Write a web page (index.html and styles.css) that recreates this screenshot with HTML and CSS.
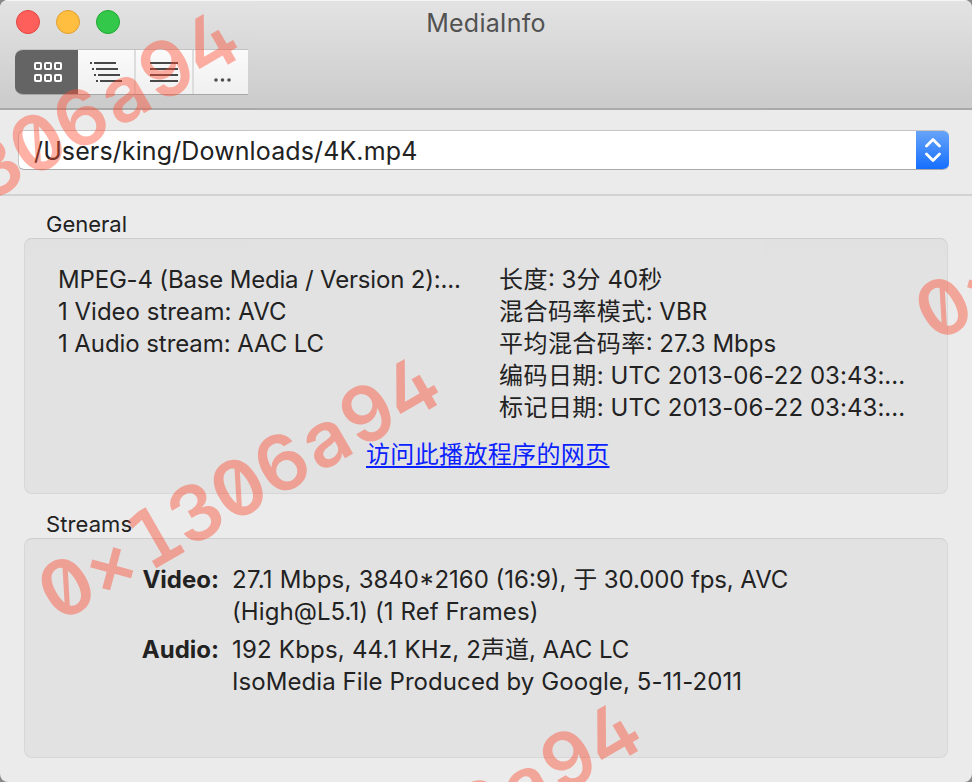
FILE: index.html
```html
<!DOCTYPE html>
<html lang="zh-CN">
<head>
<meta charset="utf-8">
<title>MediaInfo</title>
<link rel="stylesheet" href="styles.css">
</head>
<body>
<div class="window">
  <header class="titlebar">
    <div class="title-row">
      <div class="lights"><i class="light red"></i><i class="light yellow"></i><i class="light green"></i></div>
      <h1 class="title">MediaInfo</h1>
    </div>
    <div class="segments">
      <button class="segment active" aria-label="Easy">
        <svg width="28" height="20" fill="none" stroke="#fff" stroke-width="2"><rect x="1" y="1" width="6" height="6" rx="1"/><rect x="11" y="1" width="6" height="6" rx="1"/><rect x="21" y="1" width="6" height="6" rx="1"/><rect x="1" y="13" width="6" height="6" rx="1"/><rect x="11" y="13" width="6" height="6" rx="1"/><rect x="21" y="13" width="6" height="6" rx="1"/></svg>
      </button>
      <button class="segment tree" aria-label="Tree">
        <svg width="32" height="20" fill="none" stroke="#484848" stroke-width="2"><path d="M0 1h2M4 1h22M2 7h2M6 7h22M4 13h2M8 13h22M6 19h2M10 19h22"/></svg>
      </button>
      <button class="segment list" aria-label="Text">
        <svg width="28" height="20" fill="none" stroke="#484848" stroke-width="2"><path d="M0 1h28M0 7h28M0 13h28M0 19h28"/></svg>
      </button>
      <button class="segment more" aria-label="More">
        <svg width="18" height="4" fill="#505050"><circle cx="2" cy="2" r="1.8"/><circle cx="8.5" cy="2" r="1.8"/><circle cx="15" cy="2" r="1.8"/></svg>
      </button>
    </div>
  </header>

  <div class="file-row">
    <div class="combo">
      <span class="path">/Users/king/Downloads/4K.mp4</span>
      <span class="stepper">
        <svg width="16" height="26" fill="none" stroke="#fff" stroke-width="2.8" stroke-linecap="round" stroke-linejoin="round"><path d="M1.500 9 8 2.500l6.500 6.500M1.500 17 8 23.500l6.500-6.500"/></svg>
      </span>
    </div>
  </div>

  <main class="content">
    <h2 class="label general">General</h2>
    <section class="box general-box">
      <div class="columns">
        <div class="lines">
          <p class="format">MPEG-4 (Base Media / Version 2):...</p>
          <p>1 Video stream: AVC</p>
          <p class="audio-count">1 Audio stream: AAC LC</p>
        </div>
        <div class="lines">
          <p><span class="han">长度</span>: 3<span class="han">分</span> 40<span class="han">秒</span></p>
          <p><span class="han">混合码率模式</span>: VBR</p>
          <p><span class="han">平均混合码率</span>: 27.3 Mbps</p>
          <p class="date"><span class="han">编码日期</span>: UTC 2013-06-22 03:43:...</p>
          <p class="date"><span class="han">标记日期</span>: UTC 2013-06-22 03:43:...</p>
        </div>
      </div>
      <a class="link">访问此播放程序的网页</a>
    </section>

    <h2 class="label streams">Streams</h2>
    <section class="box streams-box">
      <dl class="stream">
        <dt>Video:</dt>
        <dd><p><span class="rate">27.1 Mbps, </span>3840*2160 (16:9), <span class="fps">于 30.000 fps, AVC</span></p><p class="wide">(High@L5.1) (1 Ref Frames)</p></dd>
        <dt>Audio:</dt>
        <dd><p><span class="khz">192 Kbps, 44.1 KHz, </span>2声道<span class="fps">, AAC LC</span></p><p class="wide">IsoMedia File Produced by Google, 5-11-2011</p></dd>
      </dl>
    </section>
  </main>
  <svg class="watermark" width="972" height="782" viewBox="0 0 972 782">
    <defs>
      <text id="mark" x="-198.500 -150.500 -97.500 -49.700 0 49.700 99.500 149 199" y="28.500">0<tspan class="times">×</tspan><tspan class="one">1</tspan>306a94</text>
    </defs>
    <use href="#mark" transform="translate(37 142) rotate(-30)"/>
    <use href="#mark" transform="translate(238 487) rotate(-30)"/>
    <use href="#mark" transform="translate(439 833) rotate(-30)"/>
    <use href="#mark" transform="translate(1115 207) rotate(-30)"/>
  </svg>
</div>
</body>
</html>
```
FILE: styles.css
```css
* { box-sizing: border-box; }
html { background: #888; }
body {
  margin: 0;
  font-family: Inter, "Noto Sans CJK SC", sans-serif;
  font-size: 24px;
  color: #222;
}
h1, h2, p, dl, dd { margin: 0; font-weight: 400; }
.window {
  position: relative;
  width: 972px;
  height: 782px;
  overflow: hidden;
  border-radius: 8px;
  background: #ebebeb;
}
.titlebar {
  height: 110px;
  border-top: 1px solid #f5f5f5;
  border-bottom: 2px solid #aaa;
  background: linear-gradient(#e3e3e3, #cbcbcb);
}
.title-row {
  display: grid;
  grid-template-columns: 1fr auto 1fr;
  height: 48px;
  padding: 0 0 0 16px;
}
.lights { display: flex; gap: 16px; padding-top: 9px; }
.light { width: 24px; height: 24px; border: 1px solid; border-radius: 50%; }
.red { background: #ff605c; border-color: #e2463f; }
.yellow { background: #ffbe40; border-color: #dfa033; }
.green { background: #34c84a; border-color: #20a934; }
.title { padding-right: 16px; font-size: 25px; line-height: 45px; letter-spacing: .2px; color: #525252; }
.segments {
  display: flex;
  width: 233px;
  height: 46px;
  margin-left: 15px;
  border-radius: 8px 0 0 8px;
  overflow: hidden;
  border-top: 1px solid #c3c3c3;
  border-bottom: 1px solid #a8a8a8;
}
.segment {
  display: flex;
  align-items: center;
  width: 58px;
  padding: 0;
  border: 0;
  border-right: 2px solid #ddd;
  background: linear-gradient(#fafafa, #f0f0f0);
}
.segment.active { width: 63px; padding-left: 19px; border: 0; background: #656565; }
.segment.tree { padding-left: 12px; }
.segment.list { padding-left: 14px; }
.segment.more { width: 54px; padding: 16px 0 0 20px; border: 0; }
.file-row { height: 86px; padding: 20px 23px 0 18px; border-bottom: 2px solid #d2d2d2; }
.combo {
  display: flex;
  height: 40px;
  overflow: hidden;
  border: solid #c6c6c6;
  border-width: 1px 0 1px 1px;
  border-bottom-color: #aaa;
  border-radius: 6px;
  background: #fff;
}
.path { flex: 1; padding-left: 15px; font-size: 25px; line-height: 40px; letter-spacing: .12px; }
.stepper {
  display: flex;
  align-items: center;
  justify-content: center;
  width: 33px;
  background: linear-gradient(#68a5f8, #166fff);
}
.content { padding: 13px 24px 0; }
.label { height: 29px; padding-left: 22px; font-size: 22px; line-height: 31px; }
.box { border: 1px solid #d7d7d7; border-top-color: #cecece; border-radius: 8px; background: #e2e2e2; }
.general-box { height: 256px; padding: 25px 0 0 33px; }
.streams { margin-top: 15px; letter-spacing: .1px; }
.streams-box { height: 220px; padding-top: 25px; }
.columns { display: grid; grid-template-columns: 441px 1fr; height: 160px; }
.lines p, dd p, dt { height: 32px; line-height: 32px; white-space: nowrap; }
.format { letter-spacing: -.18px; }
.audio-count { letter-spacing: -.08px; }
.han { letter-spacing: .45px; }
.date { letter-spacing: .05px; }
.rate { letter-spacing: .24px; }
.khz { letter-spacing: .2px; }
.fps { letter-spacing: -.1px; }
.wide { letter-spacing: .075px; }
.link {
  display: block;
  width: 243px;
  height: 29px;
  margin: 16px 0 0 308px;
  line-height: 30px;
  color: #0a22ff;
  letter-spacing: .35px;
  white-space: nowrap;
  text-decoration: underline;
  text-decoration-thickness: 2px;
  text-underline-offset: 3px;
}
.stream { display: grid; grid-template-columns: 194px 1fr; column-gap: 13px; row-gap: 6px; }
dt { font-weight: 700; text-align: right; }
.watermark {
  position: absolute;
  inset: 0;
  font-family: Inter, sans-serif;
  font-size: 77px;
  font-weight: 600;
  font-feature-settings: "zero", "cv02";
  text-anchor: middle;
  fill: #fd4a2e;
  opacity: .43;
  pointer-events: none;
}
.one { font-family: "DejaVu Sans Mono", monospace; font-weight: 400; stroke: #fd4a2e; stroke-width: 2px; }
.times { font-size: 72px; }
```
